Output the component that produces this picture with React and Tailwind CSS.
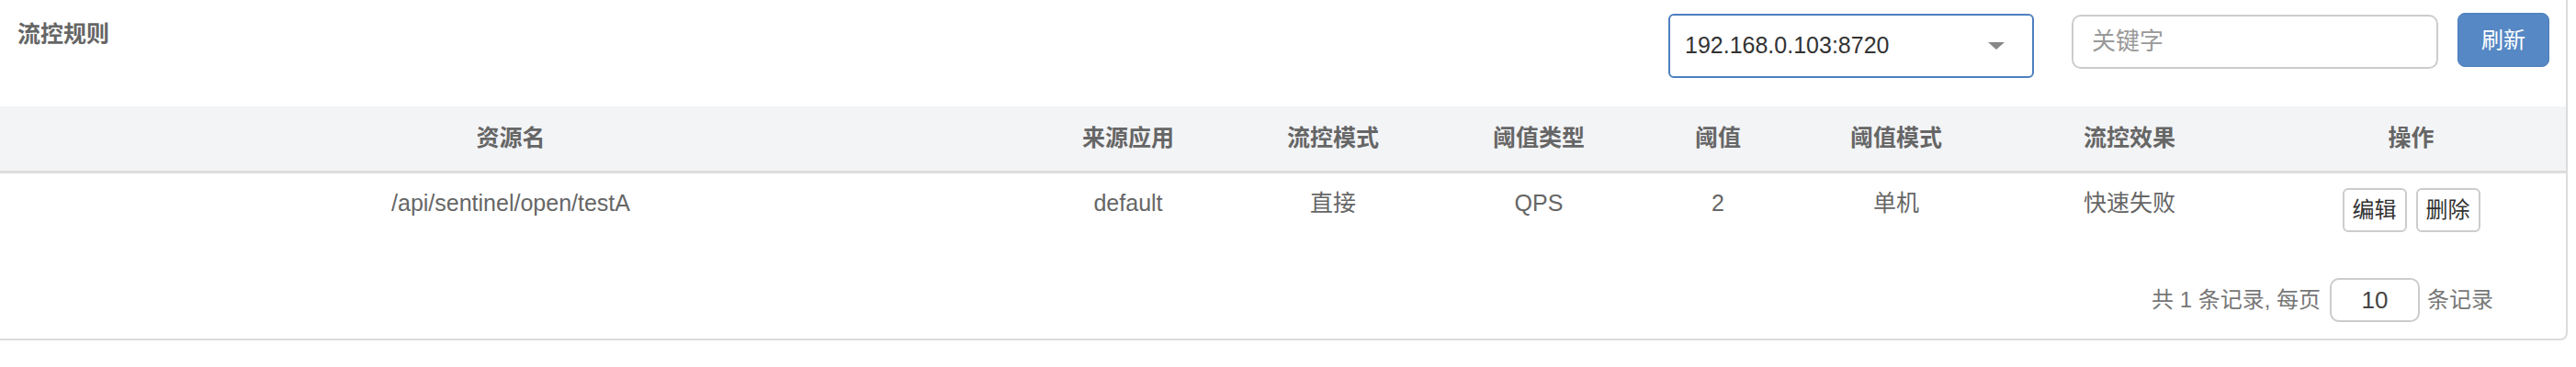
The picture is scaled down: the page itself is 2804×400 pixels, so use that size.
export default function App() {
  const font = { fontFamily: '"Liberation Sans", "Noto Sans CJK SC", Arial, sans-serif' };
  const cols = "grid grid-cols-[1112px_232px_214px_234px_156px_232px_276px_1fr]";
  const heads = ["资源名", "来源应用", "流控模式", "阈值类型", "阈值", "阈值模式", "流控效果", "操作"];
  const row = ["/api/sentinel/open/testA", "default", "直接", "QPS", "2", "单机", "快速失败"];
  return (
    <div className="w-[2804px] h-[400px] bg-white overflow-hidden" style={font}>
      <div className="w-[2795px] border-r-[2px] border-b-[2px] border-[#dcdcdc] rounded-br-[8px] bg-white">
        {/* top bar */}
        <div className="h-[116px] flex justify-between items-start">
          <div className="pl-[19px] pt-[20px] text-[25px] leading-[34px] font-bold text-[#666]">流控规则</div>
          <div className="flex items-start pr-[18px]">
            <div className="mt-[15px] w-[398px] h-[70px] border-[2px] border-[#4d7fbf] rounded-[6px] flex items-center justify-between pl-[16px] pr-[30px]">
              <span className="text-[25px] text-[#333]">192.168.0.103:8720</span>
              <svg width="18" height="8" viewBox="0 0 18 8"><path d="M0 0 L18 0 L9 8 Z" fill="#888" /></svg>
            </div>
            <div className="ml-[41px] mt-[16px] w-[399px] h-[59px] border-[2px] border-[#ccc] rounded-[10px] flex items-center pl-[20px]">
              <span className="text-[26px] text-[#999]">关键字</span>
            </div>
            <div className="ml-[21px] mt-[14px] w-[100px] h-[59px] rounded-[8px] bg-[#5588c4] border border-[#4e7eba] flex items-center justify-center text-white text-[24px]">刷新</div>
          </div>
        </div>
        {/* header */}
        <div className={`${cols} h-[73px] bg-[#f3f4f6] border-b-[3px] border-[#dddddd]`}>
          {heads.map((h) => (
            <div key={h} className="flex items-center justify-center text-[25px] font-bold text-[#666]">{h}</div>
          ))}
        </div>
        {/* data row */}
        <div className={`${cols} h-[80px]`}>
          {row.map((c, i) => (
            <div key={i} className="pt-[14px] text-center text-[25px] leading-[36px] text-[#666]">{c}</div>
          ))}
          <div className="pt-[16px] flex justify-center gap-[10px]">
            <div className="w-[70px] h-[48px] border-[2px] border-[#ccc] rounded-[6px] flex items-center justify-center text-[24px] text-[#333]">编辑</div>
            <div className="w-[70px] h-[48px] border-[2px] border-[#ccc] rounded-[6px] flex items-center justify-center text-[24px] text-[#333]">删除</div>
          </div>
        </div>
        {/* pagination */}
        <div className="mt-[34px] pb-[18px] flex justify-end items-center pr-[79px] text-[24px] text-[#777]">
          <span>共 1 条记录, 每页</span>
          <div className="ml-[10px] w-[98px] h-[48px] border-[2px] border-[#ccc] rounded-[10px] flex items-center justify-center text-[26px] text-[#444]">10</div>
          <span className="ml-[8px]">条记录</span>
        </div>
      </div>
    </div>
  );
}
